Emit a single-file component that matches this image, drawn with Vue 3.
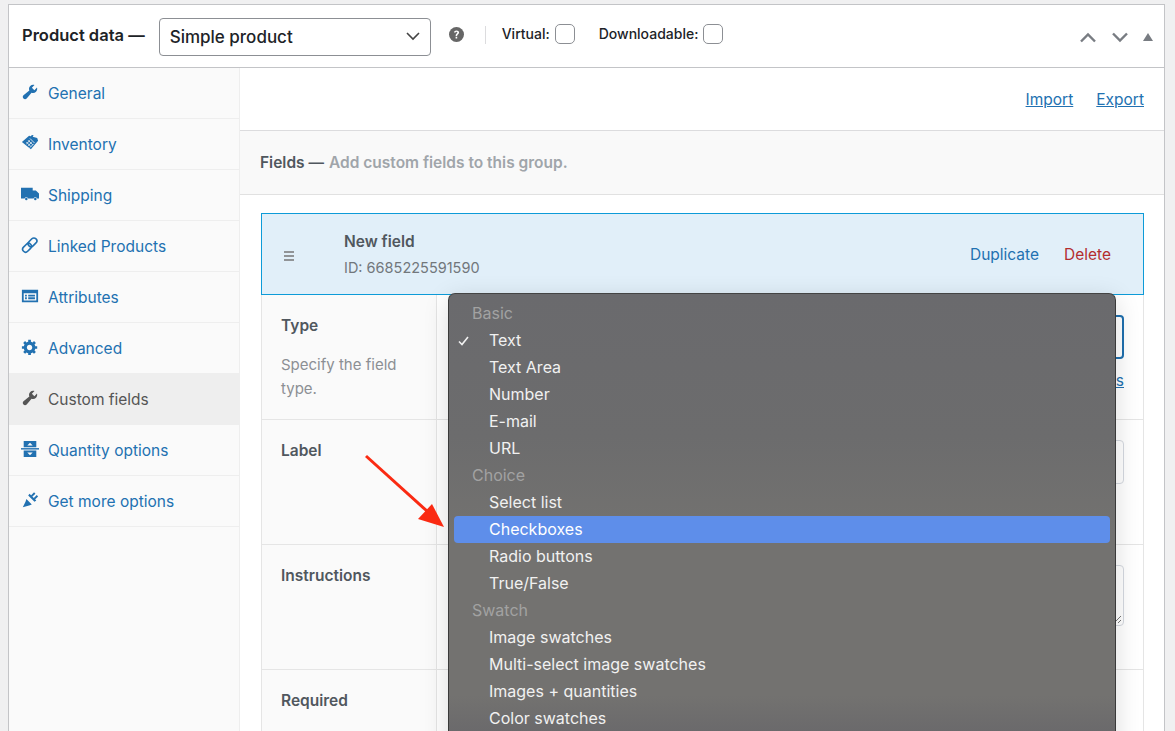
<template>
  <div class="page">
    <div class="panel">
      <header class="panel-head">
        <span class="title">Product data —</span>
        <div class="type-select">
          <span>Simple product</span>
          <svg width="14" height="9" viewBox="0 0 14 9"><path d="M1 1l6 6 6-6" fill="none" stroke="#444" stroke-width="1.6" /></svg>
        </div>
        <svg class="help" width="17" height="17" viewBox="0 0 17 17">
          <circle cx="8.5" cy="8.5" r="7.5" fill="#666" />
          <path d="M6 6.6c0-1.5 1.1-2.2 2.5-2.2s2.6.7 2.6 2.1c0 1.800-2 1.800-2 3.400H7.600c0-2.300 1.800-2.300 1.800-3.300 0-.5-.4-.8-.9-.8-.6 0-.9.4-.9.8z M7.600 10.700h1.600v1.700H7.600z" fill="#fff" />
        </svg>
        <span class="sep"></span>
        <label class="check first">Virtual:<i class="box"></i></label>
        <label class="check">Downloadable:<i class="box"></i></label>
        <div class="head-arrows">
          <svg width="18" height="11" viewBox="0 0 18 11"><path d="M2 9.500l7-7 7 7" fill="none" stroke="#787c82" stroke-width="2.400" /></svg>
          <svg width="18" height="11" viewBox="0 0 18 11"><path d="M2 1.500l7 7 7-7" fill="none" stroke="#787c82" stroke-width="2.400" /></svg>
          <svg width="10" height="8" viewBox="0 0 10 8"><path d="M5 0l5 8H0z" fill="#787c82" /></svg>
        </div>
      </header>

      <div class="panel-body">
        <ul class="tabs">
          <li v-for="tab in tabs" :key="tab.label" :class="{ active: tab.active }">
            <svg width="18" height="18" viewBox="0 0 20 20" class="tab-icon">
              <template v-if="tab.icon === 'wrench'">
                <path fill-rule="evenodd" d="M16.680 9.770c-1.340 1.340-3.300 1.670-4.950.99l-5.410 6.520c-.99.99-2.590.99-3.580 0s-.99-2.590 0-3.570l6.520-5.420c-.68-1.650-.35-3.610.99-4.950 1.280-1.280 3.120-1.620 4.720-1.060l-2.890 2.890 2.820 2.820 2.860-2.870c.53 1.580.18 3.390-1.080 4.650z" />
              </template>
              <template v-else-if="tab.icon === 'tag'">
                <path d="M1 9l8-7 2 .5 1-1.500 2 .5-1 1.500 5 1.500 1 3-8 9.500z" />
                <path d="M6 9l5 5M8 7l5 5M10 5l5 5M6 11l4-4M8 13l4-4M10 15l4-4" stroke="#fafafa" stroke-width=".9" />
              </template>
              <template v-else-if="tab.icon === 'truck'">
                <path d="M0 3h13v3h3.500l3.500 3.500V15h-2.200a2 2 0 0 0-3.800 0H7.800a2 2 0 0 0-3.800 0H0z" />
                <circle cx="5.900" cy="15.500" r="1.400" /><circle cx="15.900" cy="15.500" r="1.400" />
              </template>
              <template v-else-if="tab.icon === 'link'">
                <g fill="none" stroke-width="1.800" :stroke="'#2271b1'">
                  <rect x="9.500" y="1.500" width="6.500" height="11" rx="3.200" transform="rotate(45 12.700 7)" />
                  <rect x="3.500" y="7.500" width="6.500" height="11" rx="3.200" transform="rotate(45 6.700 13)" />
                </g>
              </template>
              <template v-else-if="tab.icon === 'list'">
                <path fill-rule="evenodd" d="M1 3h18v14H1zm2 4v8h14V7z" />
                <path d="M4.500 8.500h2v2h-2zM8 8.500h7.500v2H8zM4.500 11.500h2v2h-2zM8 11.500h7.500v2H8z" />
              </template>
              <template v-else-if="tab.icon === 'gear'">
                <path fill-rule="evenodd" d="M18 12h-2.180c-.17.7-.44 1.350-.81 1.930l1.540 1.540-2.100 2.100-1.540-1.540c-.58.36-1.230.63-1.910.79V19H8v-2.180c-.68-.16-1.330-.43-1.910-.79l-1.540 1.540-2.120-2.120 1.540-1.540c-.36-.58-.63-1.230-.79-1.910H1V9.030h2.170c.16-.7.44-1.350.8-1.940L2.430 5.550l2.100-2.100 1.540 1.540c.58-.37 1.240-.64 1.930-.81V2h3v2.180c.68.16 1.330.43 1.910.79l1.540-1.540 2.120 2.120-1.540 1.540c.36.59.64 1.240.8 1.940H18V12zm-8.500 1.500c1.660 0 3-1.340 3-3s-1.340-3-3-3-3 1.340-3 3 1.340 3 3 3z" />
              </template>
              <template v-else-if="tab.icon === 'qty'">
                <path fill-rule="evenodd" d="M3 1h14v7H3zm7 2L7 6.200h6z" />
                <path d="M0 9h20v1.600H0z" />
                <path fill-rule="evenodd" d="M3 11.600h14V19H3zm7 5.400l3-3.200H7z" />
              </template>
              <template v-else>
                <path d="M2 18l3-6 1-3 6 6-3 1zM8 5l7 7 2-1.500L9.500 3z" />
                <path d="M11 5l3.500-3.500 1.500 1.500-3.500 3.500zM14 8l3.500-3.500L19 6l-3.500 3.500z" />
              </template>
            </svg>
            <span>{{ tab.label }}</span>
          </li>
        </ul>

        <main class="content">
          <div class="toolbar">
            <a>Import</a>
            <a>Export</a>
          </div>
          <div class="fields-head"><b>Fields —</b> Add custom fields to this group.</div>

          <div class="fields">
            <div class="field-top">
              <svg class="drag" width="12" height="10" viewBox="0 0 12 10"><path d="M1 1h10M1 5h10M1 9h10" stroke="#777" stroke-width="1.300" /></svg>
              <div class="field-name">
                <strong>New field</strong>
                <span>ID: 6685225591590</span>
              </div>
              <a class="dup">Duplicate</a>
              <a class="del">Delete</a>
            </div>

            <div class="row">
              <div class="row-label">
                <b>Type</b>
                <p>Specify the field type.</p>
              </div>
              <div class="row-value">
                <div class="ctl ctl-select"></div>
                <a class="more-link">Swatches</a>
              </div>
            </div>
            <div class="row">
              <div class="row-label"><b>Label</b></div>
              <div class="row-value"><div class="ctl ctl-input"></div></div>
            </div>
            <div class="row">
              <div class="row-label"><b>Instructions</b></div>
              <div class="row-value">
                <div class="ctl ctl-area">
                  <svg width="9" height="9" viewBox="0 0 9 9"><path d="M1 8l7-7M5 8l3-3" stroke="#777" stroke-width="1" /></svg>
                </div>
              </div>
            </div>
            <div class="row">
              <div class="row-label"><b>Required</b></div>
              <div class="row-value"></div>
            </div>
          </div>
        </main>
      </div>
    </div>

    <div class="popup">
      <div
        v-for="item in options"
        :key="item.label"
        :class="['opt', item.group ? 'group' : '', item.hover ? 'hover' : '']"
      >
        <svg v-if="item.checked" class="tick" width="11" height="10" viewBox="0 0 11 10"><path d="M1 5.500l3 3L10 1" fill="none" stroke="#f2f2f2" stroke-width="1.600" /></svg>
        {{ item.label }}
      </div>
    </div>

    <svg class="annot" width="90" height="100" viewBox="0 0 90 100">
      <path d="M2 2l62 56" stroke="#fa2a12" stroke-width="3" fill="none" />
      <path d="M80 73L54 65l14-15z" fill="#fa2a12" />
    </svg>
  </div>
</template>

<script setup>
const tabs = [
  { label: 'General', icon: 'wrench' },
  { label: 'Inventory', icon: 'tag' },
  { label: 'Shipping', icon: 'truck' },
  { label: 'Linked Products', icon: 'link' },
  { label: 'Attributes', icon: 'list' },
  { label: 'Advanced', icon: 'gear' },
  { label: 'Custom fields', icon: 'wrench', active: true },
  { label: 'Quantity options', icon: 'qty' },
  { label: 'Get more options', icon: 'plug' }
]

const options = [
  { label: 'Basic', group: true },
  { label: 'Text', checked: true },
  { label: 'Text Area' },
  { label: 'Number' },
  { label: 'E-mail' },
  { label: 'URL' },
  { label: 'Choice', group: true },
  { label: 'Select list' },
  { label: 'Checkboxes', hover: true },
  { label: 'Radio buttons' },
  { label: 'True/False' },
  { label: 'Swatch', group: true },
  { label: 'Image swatches' },
  { label: 'Multi-select image swatches' },
  { label: 'Images + quantities' },
  { label: 'Color swatches' }
]
</script>

<style>
html,
body {
  background: #f0f0f1;
  overflow: hidden;
}
</style>

<style scoped>
.page {
  position: relative;
  height: 731px;
  overflow: hidden;
  padding: 4px 10px 0 8px;
  box-sizing: border-box;
  font-family: Inter, "Noto Sans", sans-serif;
  font-size: 15.500px;
  color: #50575e;
}

.panel {
  background: #fff;
  border: 1px solid #c3c4c7;
  border-bottom: none;
  height: 760px;
}

.panel-head {
  display: flex;
  align-items: center;
  height: 62px;
  border-bottom: 1px solid #c3c4c7;
  padding-left: 13px;
  color: #1d2327;
}

.title {
  font-size: 16.500px;
  font-weight: 600;
  margin-top: -3px;
}

.type-select {
  width: 272px;
  height: 38px;
  margin-left: 14px;
  box-sizing: border-box;
  border: 1px solid #8c8f94;
  border-radius: 4px;
  display: flex;
  align-items: center;
  justify-content: space-between;
  padding: 0 10px 0 10px;
  font-size: 17px;
  font-weight: 500;
  margin-top: 1px;
}

.help {
  margin: -4px 0 0 17px;
}

.sep {
  width: 1px;
  height: 18px;
  background: #dcdcde;
  margin: -2px 0 0 20px;
}

.check {
  display: flex;
  align-items: center;
  gap: 5px;
  font-size: 14px;
  font-weight: 500;
  margin: -5px 0 0 24px;
}

.check.first {
  margin-left: 16px;
}

.box {
  width: 20px;
  height: 20px;
  box-sizing: border-box;
  border: 1px solid #8c8f94;
  border-radius: 5px;
  background: #fff;
}

.head-arrows {
  margin-left: auto;
  display: flex;
  align-items: center;
  gap: 14px;
  padding-right: 11px;
  margin-top: 2px;
}

.panel-body {
  display: flex;
  height: 700px;
}

.tabs {
  list-style: none;
  margin: 0;
  padding: 0;
  width: 230px;
  flex: none;
  background: #fafafa;
  border-right: 1px solid #eee;
}

.tabs li {
  height: 50px;
  border-bottom: 1px solid #eee;
  display: flex;
  align-items: center;
  color: #2271b1;
  position: relative;
  padding-left: 39px;
}

.tabs li.active {
  background: #eee;
  color: #555;
}

.tab-icon {
  position: absolute;
  left: 12px;
  top: 15px;
  fill: currentColor;
}

.content {
  flex: 1;
  min-width: 0;
}

.toolbar {
  height: 63px;
  box-sizing: border-box;
  border-bottom: 1px solid #dcdcde;
  display: flex;
  justify-content: flex-end;
  align-items: center;
  gap: 23px;
  padding-right: 20px;
}

.toolbar a {
  color: #2271b1;
  text-decoration: underline;
}

.fields-head {
  height: 64px;
  box-sizing: border-box;
  background: #f9f9f9;
  border-bottom: 1px solid #e1e1e1;
  display: flex;
  align-items: center;
  gap: 5px;
  padding-left: 20px;
  color: #a0a5aa;
  font-weight: 600;
}

.fields-head b {
  color: #50575e;
  font-weight: 600;
}

.fields {
  margin: 18px 20px 0 21px;
  border: 1px solid #e5e5e5;
  border-top: none;
}

.field-top {
  height: 82px;
  box-sizing: border-box;
  margin: 0 -1px;
  background: #e1eff9;
  border: 1px solid #0d9bd8;
  display: flex;
  align-items: center;
  padding-left: 21px;
}

.drag {
  flex: none;
  margin-top: 3px;
}

.field-name {
  flex: 1;
  display: flex;
  flex-direction: column;
  gap: 8px;
  padding-left: 49px;
}

.field-name strong {
  color: #50575e;
  font-weight: 600;
}

.field-name span {
  color: #72777c;
  font-size: 14.500px;
}

.dup {
  color: #2271b1;
}

.del {
  color: #b32d2e;
  margin: 0 32px 0 25px;
}

.row {
  display: flex;
  height: 125px;
  box-sizing: border-box;
  border-bottom: 1px solid #e5e5e5;
}

.row-label {
  width: 175px;
  box-sizing: border-box;
  background: #fafafa;
  border-right: 1px solid #e5e5e5;
  padding: 21px 18px 0 19px;
}

.row-label b {
  color: #50575e;
  font-weight: 600;
  line-height: 20px;
  display: block;
}

.row-label p {
  margin: 17px 0 0;
  color: #8c8f94;
  font-size: 15px;
  line-height: 24px;
}

.row-value {
  flex: 1;
  position: relative;
  padding: 20px 19px 0 12px;
}

.ctl {
  box-sizing: border-box;
  border-radius: 4px;
  position: relative;
}

.ctl-select {
  height: 44px;
  border: 2px solid #1f6fae;
}

.ctl-input {
  height: 44px;
  border: 1px solid #d5d9e0;
}

.ctl-area {
  height: 61px;
  border: 1px solid #d5d9e0;
}

.ctl-area svg {
  position: absolute;
  right: 1px;
  bottom: 1px;
}

.more-link {
  display: block;
  text-align: right;
  margin-top: 12px;
  color: #2271b1;
  text-decoration: underline;
}

.popup {
  position: absolute;
  left: 448px;
  top: 293px;
  width: 668px;
  height: 480px;
  box-sizing: border-box;
  padding: 6px 5px;
  border-radius: 7px;
  border: 1px solid #3a3a3a;
  border-top-color: #444;
  background: linear-gradient(#6a6a6d 0, #6c6c6d 30%, #737270 50%, #737270 84%, #6a696b 92%);
  box-shadow: 0 6px 26px rgba(0, 0, 0, .14);
  color: #f1f1f1;
  font-size: 16px;
}

.opt {
  position: relative;
  height: 27px;
  line-height: 27px;
  padding-left: 35px;
  border-radius: 4px;
}

.opt.group {
  padding-left: 18px;
  color: #a2a2a2;
}

.opt.hover {
  background: #5e8eea;
  color: #fff;
}

.tick {
  position: absolute;
  left: 4px;
  top: 9px;
}

.annot {
  position: absolute;
  left: 364px;
  top: 454px;
}
</style>
